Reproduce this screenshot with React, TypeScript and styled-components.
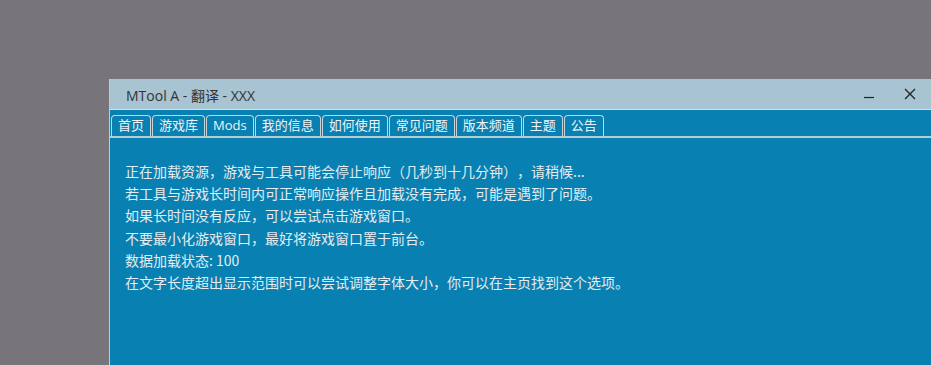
import React from 'react'
import styled, { createGlobalStyle } from 'styled-components'

const GlobalStyle = createGlobalStyle`
  html, body {
    margin: 0;
    padding: 0;
    background: #77757a;
    overflow: hidden;
  }
  body {
    font-family: "Segoe UI", "Open Sans", "Noto Sans CJK SC", sans-serif;
  }
`

const tabs = ['首页', '游戏库', 'Mods', '我的信息', '如何使用', '常见问题', '版本频道', '主题', '公告']

const lines = [
  '正在加载资源，游戏与工具可能会停止响应（几秒到十几分钟），请稍候...',
  '若工具与游戏长时间内可正常响应操作且加载没有完成，可能是遇到了问题。',
  '如果长时间没有反应，可以尝试点击游戏窗口。',
  '不要最小化游戏窗口，最好将游戏窗口置于前台。',
  '数据加载状态: 100',
  '在文字长度超出显示范围时可以尝试调整字体大小，你可以在主页找到这个选项。',
]

const App = () => {
  return (
    <>
      <GlobalStyle />
      <Desktop>
        <Window>
          {/* TITLE BAR */}
          <TitleBar>
            <Title>MTool A - 翻译 - XXX</Title>
            <Controls>
              <CtrlButton aria-label="minimize">
                <svg width="12" height="12" viewBox="0 0 12 12">
                  <line x1="1" y1="9.5" x2="11" y2="9.5" stroke="#222" strokeWidth="1.2" />
                </svg>
              </CtrlButton>
              <CtrlButton aria-label="close">
                <svg width="12" height="12" viewBox="0 0 12 12">
                  <path d="M1 1 L11 11 M11 1 L1 11" stroke="#222" strokeWidth="1.3" />
                </svg>
              </CtrlButton>
            </Controls>
          </TitleBar>

          {/* TABS */}
          <TabStrip>
            {tabs.map((t) => (
              <Tab key={t}>{t}</Tab>
            ))}
          </TabStrip>

          {/* CONTENT */}
          <Content>
            {lines.map((l) => (
              <Line key={l}>{l}</Line>
            ))}
          </Content>
        </Window>
      </Desktop>
    </>
  )
}

export default App

const Desktop = styled.div`
  width: 931px;
  height: 365px;
  padding: 79px 0 0 109px;
  box-sizing: border-box;
  display: flex;
`

const Window = styled.div`
  flex: 1;
  display: flex;
  flex-direction: column;
  border-left: 1px solid #b9cfdb;
  background: #0880b1;
`

const TitleBar = styled.div`
  height: 30px;
  background: #a8c3d1;
  display: flex;
  align-items: center;
  justify-content: space-between;
  padding-left: 16px;
  border-bottom: 1px solid #d4e2ea;
`

const Title = styled.div`
  font-size: 14px;
  color: #333;
  padding-top: 1px;
`

const Controls = styled.div`
  display: flex;
  height: 100%;
`

const CtrlButton = styled.div`
  width: 42px;
  height: 100%;
  display: flex;
  align-items: center;
  justify-content: center;
  &:first-child {
    width: 40px;
  }
  &:last-child {
    width: 42px;
  }
`

const TabStrip = styled.div`
  display: flex;
  align-items: flex-end;
  gap: 1px;
  height: 28px;
  padding-left: 1px;
  border-bottom: 2px solid #b8ccd6;
  box-sizing: border-box;
`

const Tab = styled.div`
  height: 20px;
  line-height: 19px;
  padding: 0 6px;
  font-size: 13px;
  color: #eef4f7;
  border: 1px solid #c6d5dc;
  border-bottom: none;
  border-radius: 4px 4px 0 0;
  white-space: nowrap;
`

const Content = styled.div`
  flex: 1;
  padding: 22px 15px 0;
`

const Line = styled.div`
  font-family: "Noto Sans CJK SC", "Open Sans", sans-serif;
  font-size: 14px;
  line-height: 22.2px;
  color: #e3edf2;
  white-space: nowrap;
  text-spacing-trim: space-all;
`
